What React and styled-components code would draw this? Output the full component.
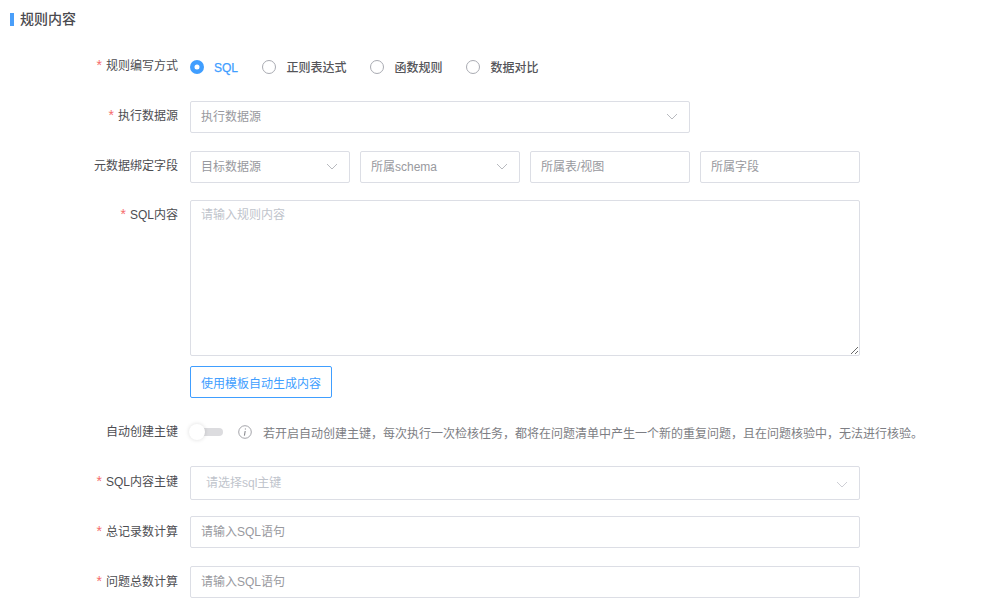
import React from "react";
import styled, { createGlobalStyle } from "styled-components";

const Global = createGlobalStyle`
  html, body { margin: 0; padding: 0; background: #fff; }
  body { font-family: "Liberation Sans", "Noto Sans CJK SC", sans-serif; font-size: 12px; color: #4a4a4f; -webkit-font-smoothing: antialiased; }
  #root { width: 986px; height: 610px; overflow: hidden; }
`;

const Page = styled.div`
  width: 986px;
  height: 610px;
  overflow: hidden;
  padding-top: 12px;
  box-sizing: border-box;
`;

const SectionTitle = styled.h2`
  margin: 0 0 23px 10px;
  height: 15px;
  display: flex;
  align-items: center;
  gap: 6px;
  font-size: 14px;
  font-weight: 500;
  color: #4b4b50;
  line-height: 15px;
  &::before {
    content: "";
    width: 4px;
    height: 13px;
    background: #4a9ffa;
  }
`;

const Row = styled.div`
  display: flex;
  align-items: flex-start;
  margin-top: ${(p) => p.$mt ?? 0}px;
  margin-bottom: ${(p) => p.$mb ?? 18}px;
`;

const Label = styled.label`
  width: 178px;
  flex: none;
  margin-right: 12px;
  text-align: right;
  font-size: 12px;
  line-height: 16px;
  padding-top: ${(p) => p.$pt ?? 7}px;
  color: #4d4d52;
  white-space: nowrap;
`;

const Star = styled.span`
  color: #f56c6c;
  font-size: 14px;
  line-height: 0;
  margin-right: 4px;
`;

const RadioGroup = styled.div`
  display: flex;
  align-items: center;
  height: 16px;
  padding-top: 8px;
  margin-bottom: 2px;
`;

const RadioItem = styled.span`
  display: inline-flex;
  align-items: center;
  margin-right: ${(p) => (p.$on ? 24 : 23.5)}px;
  font-size: 12px;
  font-weight: 500;
  color: ${(p) => (p.$on ? "#409eff" : "#55555a")};
`;

const RadioText = styled.span`
  margin-top: ${(p) => (p.$on ? 4 : 0)}px;
  -webkit-text-stroke: ${(p) => (p.$on ? "0.25px #409eff" : "0")};
`;

const RadioDot = styled.i`
  width: ${(p) => (p.$on ? 14 : 12)}px;
  height: ${(p) => (p.$on ? 14 : 12)}px;
  box-sizing: content-box;
  border-radius: 50%;
  margin-top: 2px;
  margin-right: ${(p) => (p.$on ? 10 : 10.5)}px;
  flex: none;
  background: #fff;
  border: ${(p) => (p.$on ? "0" : "1px solid #a9abb2")};
  box-shadow: ${(p) => (p.$on ? "inset 0 0 0 4.5px #409eff" : "none")};
`;

const Box = styled.div`
  box-sizing: border-box;
  width: ${(p) => p.$w}px;
  height: ${(p) => p.$h ?? 32}px;
  flex: none;
  display: flex;
  align-items: ${(p) => (p.$top ? "flex-start" : "center")};
  justify-content: space-between;
  padding: ${(p) => (p.$top ? "6px 10px" : `0 11px 0 ${p.$pl ?? 10}px`)};
  background: #fff;
  border: 1px solid #dcdee5;
  border-radius: 2px;
  font-size: 12px;
  line-height: 16px;
  color: ${(p) => (p.$light ? "#c0c4cc" : "#98999e")};
  white-space: nowrap;
  position: relative;
`;

const Fields = styled.div`
  display: flex;
  gap: 10px;
`;

const Chevron = styled.svg`
  width: 12px;
  height: 7px;
  flex: none;
  fill: none;
  margin-top: ${(p) => (p.$low ? 2 : 0)}px;
  margin-bottom: ${(p) => (p.$low ? 0 : 2)}px;
  stroke: ${(p) => (p.$low ? "#c8cad0" : "#b0b2b8")};
  stroke-width: 0.9;
`;

const Resize = styled.svg`
  position: absolute;
  right: 1px;
  bottom: 1px;
  width: 7px;
  height: 7px;
  stroke: #6a6a6a;
  stroke-width: 1;
`;

const GhostButton = styled.button`
  display: block;
  box-sizing: border-box;
  width: 142px;
  height: 32px;
  margin: 10px 0 0 190px;
  padding: 0;
  background: #fff;
  border: 1px solid #409eff;
  border-radius: 2px;
  color: #409eff;
  font: inherit;
  font-size: 12px;
`;

const Switch = styled.span`
  display: block;
  position: relative;
  width: 33px;
  height: 8px;
  flex: none;
  &::before {
    content: "";
    position: absolute;
    left: 0;
    top: 0;
    width: 33px;
    height: 8px;
    border-radius: 4px;
    background: #dcdcdf;
  }
  &::after {
    content: "";
    position: absolute;
    left: -1px;
    top: -4px;
    width: 16px;
    height: 16px;
    border-radius: 50%;
    background: #fff;
    box-shadow: 0 0 4px rgba(0, 0, 0, 0.14);
  }
`;

const Hint = styled.div`
  display: flex;
  align-items: center;
  height: 18px;
  gap: 11px;
  font-size: 12px;
  color: #7d7e84;
  white-space: nowrap;
`;

const SwitchLine = styled.div`
  display: flex;
  align-items: center;
  gap: 15px;
`;

const InfoIcon = styled.svg`
  width: 14px;
  height: 14px;
  flex: none;
`;

const ChevronIcon = ({ low }) => (
  <Chevron $low={low} viewBox="0 0 12 7">
    <path d="M1 1l5 5 5-5" />
  </Chevron>
);

const Req = ({ children, pt }) => (
  <Label $pt={pt}>
    <Star>*</Star>
    {children}
  </Label>
);

export default function App() {
  return (
    <Page>
      <Global />
      <SectionTitle>规则内容</SectionTitle>
      <Row $mb={25}>
        <Req pt={8}>规则编写方式</Req>
        <RadioGroup>
          <RadioItem $on><RadioDot $on /><RadioText $on>SQL</RadioText></RadioItem>
          <RadioItem><RadioDot /><RadioText>正则表达式</RadioText></RadioItem>
          <RadioItem><RadioDot /><RadioText>函数规则</RadioText></RadioItem>
          <RadioItem><RadioDot /><RadioText>数据对比</RadioText></RadioItem>
        </RadioGroup>
      </Row>
      <Row>
        <Req>执行数据源</Req>
        <Box $w={500}>执行数据源<ChevronIcon /></Box>
      </Row>
      <Row $mb={17}>
        <Label>元数据绑定字段</Label>
        <Fields>
          <Box $w={160}>目标数据源<ChevronIcon /></Box>
          <Box $w={160}>所属schema<ChevronIcon /></Box>
          <Box $w={160}>所属表/视图</Box>
          <Box $w={160}>所属字段</Box>
        </Fields>
      </Row>
      <Row $mb={0}>
        <Req>SQL内容</Req>
        <Box $w={670} $h={156} $top $light>
          请输入规则内容
          <Resize viewBox="0 0 7 7">
            <path d="M0 7L7 0M4 7L7 4" />
          </Resize>
        </Box>
      </Row>
      <GhostButton>使用模板自动生成内容</GhostButton>
      <Row $mt={25} $mb={25}>
        <Label $pt={1}>自动创建主键</Label>
        <SwitchLine>
          <Switch />
          <Hint>
            <InfoIcon viewBox="0 0 14 14">
              <circle cx="7" cy="7" r="6.3" fill="none" stroke="#9a9ba0" strokeWidth="0.9" />
              <path d="M7.4 3.4v1.2M7.2 6l-.8 4.6" fill="none" stroke="#8a8b90" strokeWidth="1.1" />
            </InfoIcon>
            若开启自动创建主键，每次执行一次检核任务，都将在问题清单中产生一个新的重复问题，且在问题核验中，无法进行核验。
          </Hint>
        </SwitchLine>
      </Row>
      <Row $mb={16}>
        <Req pt={8}>SQL内容主键</Req>
        <Box $w={670} $h={34} $pl={15} $light>请选择sql主键<ChevronIcon low /></Box>
      </Row>
      <Row>
        <Req pt={8}>总记录数计算</Req>
        <Box $w={670}>请输入SQL语句</Box>
      </Row>
      <Row $mb={0}>
        <Req pt={8}>问题总数计算</Req>
        <Box $w={670}>请输入SQL语句</Box>
      </Row>
    </Page>
  );
}
